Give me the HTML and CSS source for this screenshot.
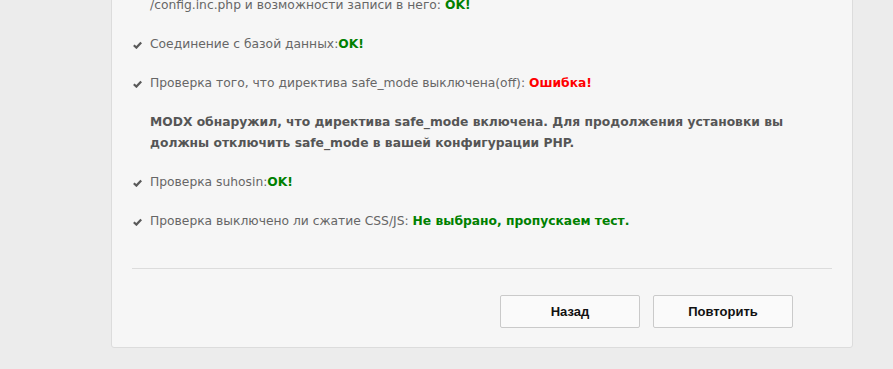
FILE: index.html
```html
<!DOCTYPE html>
<html lang="ru">
<head>
    <meta charset="UTF-8">
    <title>MODX - Установка</title>
    <link rel="stylesheet" href="styles.css">
</head>
<body>
    <div id="container">
        <div id="content">
            <ul class="checks">
                <li class="check">
                    <svg class="tick" viewBox="0 0 9 8"><path d="M0.8 4.2 L3.4 6.6 L8.2 1.4" /></svg>Проверка существования файла /core/config<br>/config.inc.php и возможности записи в него: <span class="ok">OK!</span>
                </li>
                <li class="check">
                    <svg class="tick" viewBox="0 0 9 8"><path d="M0.8 4.2 L3.4 6.6 L8.2 1.4" /></svg>Соединение с базой данных:<span class="ok">OK!</span>
                </li>
                <li class="check">
                    <svg class="tick" viewBox="0 0 9 8"><path d="M0.8 4.2 L3.4 6.6 L8.2 1.4" /></svg>Проверка того, что директива safe_mode выключена(off): <span class="fail">Ошибка!</span>
                </li>
                <li class="notice">
                    MODX обнаружил, что директива safe_mode включена. Для продолжения установки вы<br>должны отключить safe_mode в вашей конфигурации PHP.
                </li>
                <li class="check">
                    <svg class="tick" viewBox="0 0 9 8"><path d="M0.8 4.2 L3.4 6.6 L8.2 1.4" /></svg>Проверка suhosin:<span class="ok">OK!</span>
                </li>
                <li class="check">
                    <svg class="tick" viewBox="0 0 9 8"><path d="M0.8 4.2 L3.4 6.6 L8.2 1.4" /></svg>Проверка выключено ли сжатие CSS/JS: <span class="ok">Не выбрано, пропускаем тест.</span>
                </li>
            </ul>
            <div class="separator"></div>
            <div class="actions">
                <button class="button">Назад</button>
                <button class="button">Повторить</button>
            </div>
        </div>
    </div>
</body>
</html>
```

FILE: styles.css
```css
* {
    margin: 0;
    padding: 0;
    box-sizing: border-box;
}
body {
    background-color: #ececec;
    color: #666;
    font-family: 'DejaVu Sans', Verdana, sans-serif;
    font-size: 12.3px;
    height: 369px;
    overflow: hidden;
}
#container {
    margin: -47px 0 0 111px;
    width: 742px;
}
#content {
    background-color: #f6f6f6;
    border: 1px solid #dcdcdc;
    border-radius: 3px;
    padding: 20px 20px 19px 20px;
}
.checks {
    list-style: none;
    padding-left: 18px;
}
.checks li {
    line-height: 21px;
    margin-bottom: 18px;
}
.check {
    position: relative;
}
.tick {
    position: absolute;
    left: -17px;
    top: 7px;
    width: 9px;
    height: 8px;
    fill: none;
    stroke: #5a5a5a;
    stroke-width: 2.2;
}
.notice {
    font-weight: bold;
    color: #555;
}
.ok {
    color: #008000;
    font-weight: bold;
}
.fail {
    color: #f00;
    font-weight: bold;
}
.separator {
    height: 1px;
    background-color: #dcdcdc;
    margin: 36px 0 26px 0;
}
.actions {
    display: flex;
    justify-content: flex-end;
    gap: 13px;
    padding-right: 39px;
}
.button {
    width: 140px;
    height: 33px;
    background-color: #fafafa;
    border: 1px solid #cacaca;
    border-radius: 2px;
    font-family: 'Liberation Sans', Arial, sans-serif;
    font-weight: bold;
    font-size: 13px;
    color: #111;
}
```
